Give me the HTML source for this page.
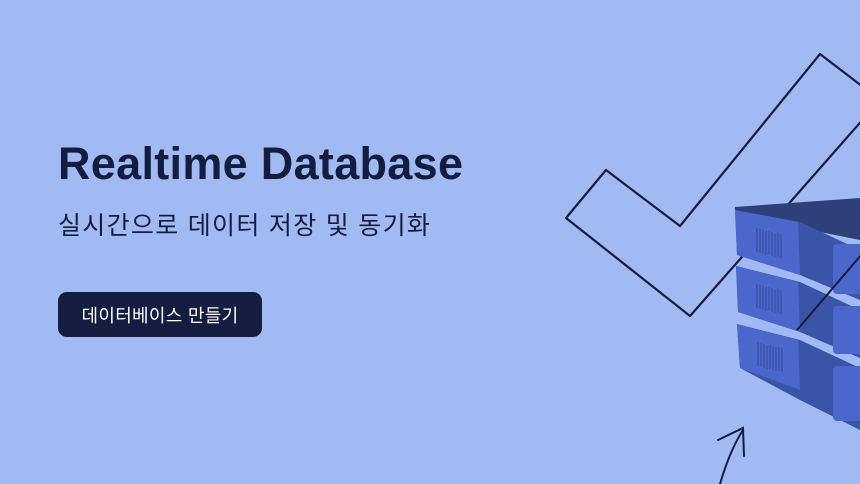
<!DOCTYPE html>
<html><head><meta charset="utf-8"><style>
body{margin:0;width:860px;height:484px;overflow:hidden;background:#a2baf4;font-family:"Liberation Sans","Noto Sans CJK KR",sans-serif;position:relative}
h1{position:absolute;left:58px;top:138px;margin:0;font-size:45px;font-weight:700;color:#141c40;letter-spacing:0.3px;line-height:52px}
.sub{position:absolute;left:58px;top:209px;font-size:25px;color:#141c40;letter-spacing:1.3px;line-height:34px}
.btn{position:absolute;left:58px;top:292px;width:204px;height:45px;border-radius:9px;background:#141c40;color:#fff;font-size:18px;display:flex;align-items:center;justify-content:center;letter-spacing:0.3px}
svg{position:absolute;left:0;top:0}
</style></head><body>
<h1>Realtime Database</h1>
<div class="sub">실시간으로 데이터 저장 및 동기화</div>
<div class="btn">데이터베이스 만들기</div>
<svg width="860" height="484">
<polygon points="566,218 606,170 680,226 820,54 880,100 690,316" fill="none" stroke="#141c40" stroke-width="2.2" stroke-linejoin="round"/>
<g>
<polygon points="735,207 860,198 860,240 735,215" fill="#2e4078"/>
<g>
<polygon points="735,210 800,222 860,250 860,300 800,275 737,255" fill="#3a55a8"/>
<polygon points="735,210 798,222 800,275 737,255" fill="#4a68cc"/>
<rect x="833" y="244" width="30" height="50" rx="4" fill="#4a68cc"/>
</g>
<g>
<polygon points="736,266 800,282 860,310 860,358 800,332 738,312" fill="#3a55a8"/>
<polygon points="736,266 798,282 800,332 738,312" fill="#4a68cc"/>
<rect x="833" y="306" width="30" height="48" rx="4" fill="#4a68cc"/>
</g>
<g>
<polygon points="737,324 800,340 860,368 860,430 800,400 740,368" fill="#3a55a8"/>
<polygon points="737,324 798,340 800,390 740,368" fill="#4a68cc"/>
<rect x="833" y="366" width="30" height="55" rx="4" fill="#4a68cc"/>
</g>
<g stroke="#34499a" stroke-width="1">
<path d="M757,228v24M760,229v24M763,230v24M766,231v24M769,231v24M772,232v24M775,233v24M778,233v24M781,234v24"/>
<path d="M757,284v24M760,285v24M763,286v24M766,287v24M769,287v24M772,288v24M775,289v24M778,289v24M781,290v24"/>
<path d="M758,342v24M761,343v24M764,344v24M767,345v24M770,345v24M773,346v24M776,347v24M779,347v24M782,348v24"/>
</g>
</g>
<line x1="797" y1="330" x2="862" y2="254" stroke="#141c40" stroke-width="2"/>
<path d="M720,484 Q730,450 743,430 M718,440 L743,428 L744,456" fill="none" stroke="#141c40" stroke-width="2" stroke-linecap="round"/>
</svg>
</body></html>
